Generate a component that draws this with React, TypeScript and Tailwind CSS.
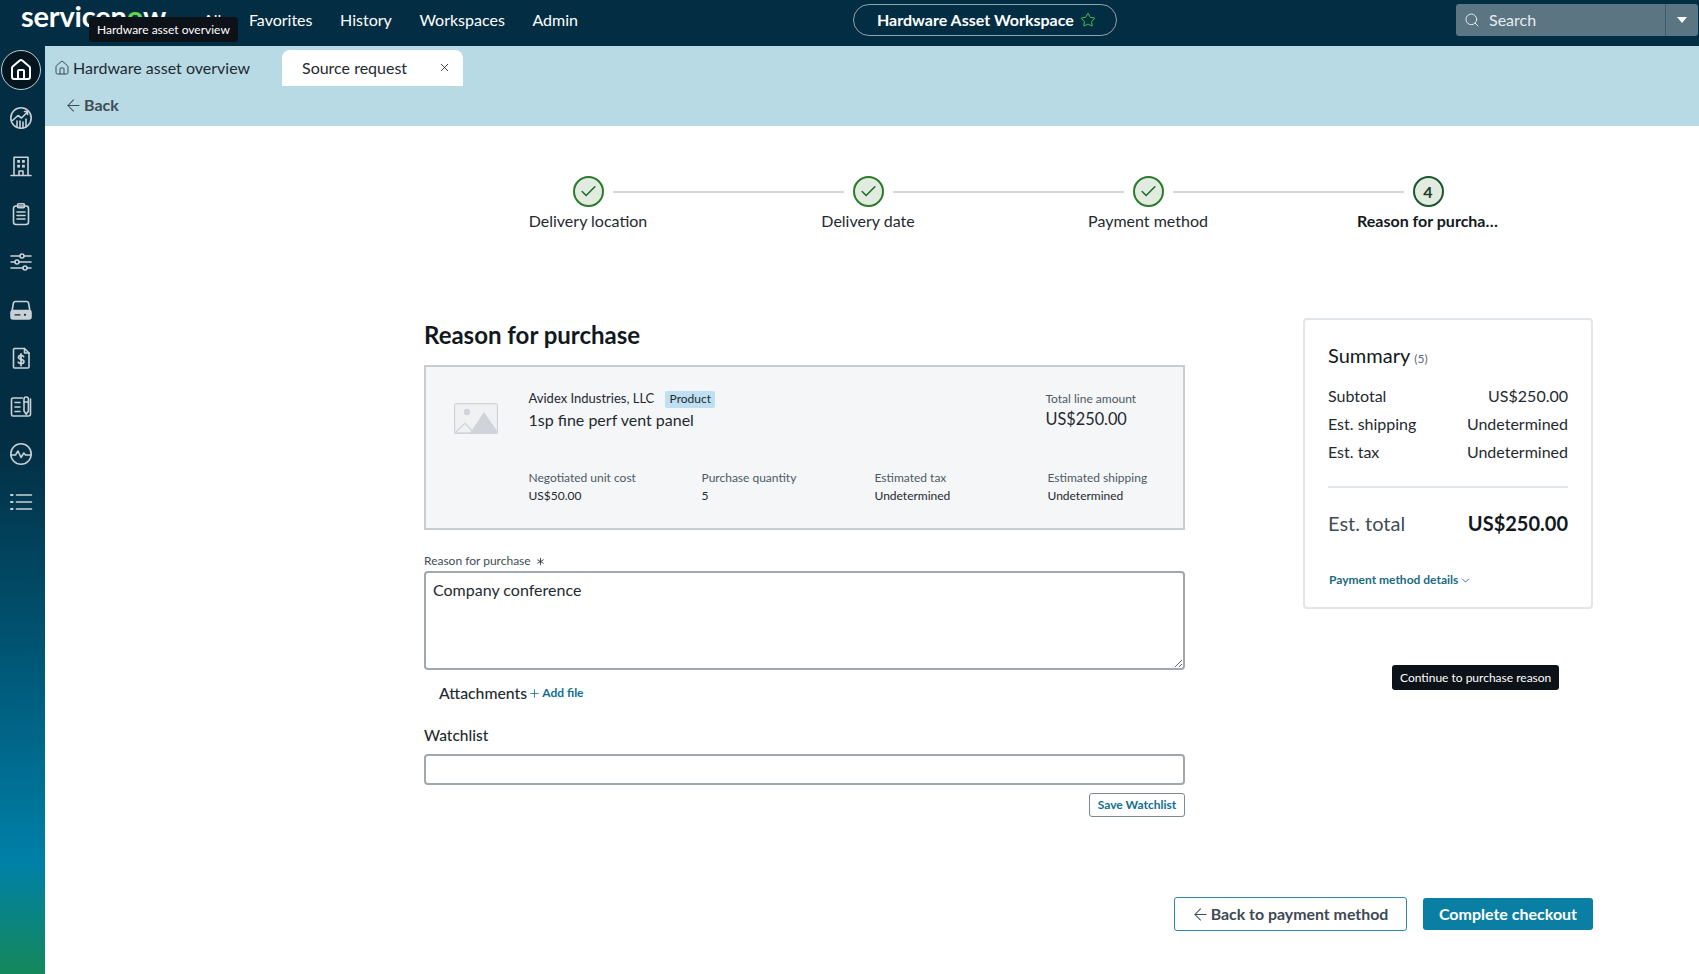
import { ArrowLeft, Asterisk, Check, ChevronDown, House, Plus, Search, Star, X } from "lucide-react";

const navLinks = ["All", "Favorites", "History", "Workspaces", "Admin"];

const steps = [
  { label: "Delivery location", done: true },
  { label: "Delivery date", done: true },
  { label: "Payment method", done: true },
  { label: "Reason for purchase", done: false },
];

const lineDetails = [
  { label: "Negotiated unit cost", value: "US$50.00" },
  { label: "Purchase quantity", value: "5" },
  { label: "Estimated tax", value: "Undetermined" },
  { label: "Estimated shipping", value: "Undetermined" },
];

const summaryRows = [
  { label: "Subtotal", value: "US$250.00" },
  { label: "Est. shipping", value: "Undetermined" },
  { label: "Est. tax", value: "Undetermined" },
];

// stroke icons of the side rail, drawn by hand to follow the reference
const railIcons = [
  <>
    <circle cx="12" cy="12" r="10.2" />
    <path d="M3.5 14.5 9 9.5l3.5 2.5 6-6M15.5 5.5h3v3" />
    <path d="M8 21v-6M11 22v-7M14 22v-6M17 21v-8" />
  </>,
  <>
    <path d="M5 21.5V3.2h14v18.3M2 21.5h20M10 21.5v-4.5h4v4.5" />
    <g fill="currentColor" stroke="none">
      <rect x="8.2" y="6" width="2.8" height="2.8" />
      <rect x="13" y="6" width="2.8" height="2.8" />
      <rect x="8.2" y="10.8" width="2.8" height="2.8" />
      <rect x="13" y="10.8" width="2.8" height="2.8" />
    </g>
  </>,
  <>
    <rect x="4.5" y="4" width="15" height="18.5" rx="2.5" />
    <rect x="8.5" y="1.8" width="7" height="4" rx="1.2" />
    <path d="M8 10h8M8 13.5h8M8 17h8" />
  </>,
  <>
    <path d="M2 6h9M15 6h7M2 12h4M10 12h12M2 18h12M18 18h4" />
    <circle cx="13" cy="6" r="2" />
    <circle cx="8" cy="12" r="2" />
    <circle cx="16" cy="18" r="2" />
  </>,
  <>
    <path d="M3 13.5 4.3 5.6A2.4 2.4 0 0 1 6.7 3.5h10.6a2.4 2.4 0 0 1 2.4 2.1L21 13.5" />
    <path
      d="M4 12.5h16a2 2 0 0 1 2 2V19a2 2 0 0 1-2 2H4a2 2 0 0 1-2-2v-4.5a2 2 0 0 1 2-2z"
      fill="currentColor"
    />
    <circle cx="16" cy="16.8" r="1.1" fill="#032d42" stroke="none" />
    <path d="M6 16.8h5" stroke="#032d42" strokeWidth="1.2" />
  </>,
  <>
    <path d="M5.5 2.5h10l4.5 4.5v14a1 1 0 0 1-1 1H5.5a1 1 0 0 1-1-1v-17.5a1 1 0 0 1 1-1z" />
    <path d="M15.5 2.5V7H20" />
    <path d="M14.6 10.6c-.5-.9-1.4-1.3-2.5-1.3-1.5 0-2.6.8-2.6 2s1 1.7 2.6 2.1c1.6.4 2.8.9 2.8 2.2s-1.2 2.1-2.8 2.1c-1.2 0-2.3-.5-2.8-1.5M12 7.8v11.8" strokeWidth="1.8" />
  </>,
  <>
    <path d="M13.5 4H4a1.5 1.5 0 0 0-1.5 1.5v15A1.5 1.5 0 0 0 4 22h15.5a2 2 0 0 0 2-2V5" />
    <path d="M6 8.5h5M6 13h5M6 17.5h5" />
    <path d="M15 5.2a2.2 2.2 0 0 1 4.4 0V17l-2.2 3.2L15 17z" />
    <path d="M15 8h4.4" />
  </>,
  <>
    <circle cx="12" cy="12" r="10.2" />
    <path d="M2 13h4.5L9 9l3 6.5 2.8-4.5 1.7 2H22" />
  </>,
  <>
    <path d="M7.5 5h15M7.5 12h15M7.5 19h15" />
    <path d="M2 5h1.6M2 12h1.6M2 19h1.6" strokeWidth="2" />
  </>,
];

function TopBar() {
  return (
    <header className="relative flex h-[46px] shrink-0 items-center bg-[#032d42] pb-[6px] text-white">
      <div className="flex w-[853px] shrink-0 items-center pl-[21px]">
        <span className="mb-[8px] w-[182px] text-[29px] leading-[34px] font-bold tracking-[-0.2px]">
          servicen<span className="text-[#62d84e]">o</span>w
        </span>
        <nav className="flex items-center gap-[27.6px] text-[16px] leading-[20px]">
          {navLinks.map((link) => (
            <a key={link}>{link}</a>
          ))}
        </nav>
      </div>
      <div className="flex h-[32px] w-[264px] items-center rounded-full border border-[#8fa3ad] pl-[23px]">
        <span className="text-[16px] leading-[20px] font-bold">Hardware Asset Workspace</span>
        <Star className="ml-[6px] h-[16px] w-[16px] text-[#46c846]" strokeWidth={1.5} />
      </div>
      <div className="ml-auto mr-[1px] flex h-[32px] w-[242px] items-center rounded-[3px] bg-[#5b7583]">
        <Search className="ml-[8px] h-[16px] w-[16px] text-[#e7ecef]" strokeWidth={1.5} />
        <span className="ml-[9px] text-[16px] leading-[20px] text-[#e7ecef]">Search</span>
        <span className="ml-auto flex h-full w-[33px] items-center justify-center border-l border-[#3f5a69]">
          <svg width="10" height="6" viewBox="0 0 10 6">
            <path d="M0 0h10L5 6z" fill="#fff" />
          </svg>
        </span>
      </div>
      <div className="absolute top-[17px] left-[89px] rounded-[4px] bg-[#0c1217] px-[8px] py-[4px] text-[12px] leading-[17px] whitespace-nowrap">
        Hardware asset overview
      </div>
    </header>
  );
}

function SideRail() {
  return (
    <aside className="flex w-[45px] shrink-0 flex-col bg-[linear-gradient(to_bottom,#032d42_0%,#032d42_42%,#005a7a_68%,#0080a8_88%,#14885a_100%)] pr-[3px]">
      <div className="flex h-[48px] items-center justify-center">
        <span className="flex h-[40px] w-[40px] items-center justify-center rounded-full border border-[#c3ccd1] bg-[#03161f]">
          <House className="h-[24px] w-[24px] text-white" strokeWidth={2} />
        </span>
      </div>
      {railIcons.map((icon, i) => (
        <div key={i} className="flex h-[48px] items-center justify-center">
          <svg
            width="24"
            height="24"
            viewBox="0 0 24 24"
            fill="none"
            stroke="currentColor"
            strokeWidth="1.6"
            strokeLinecap="round"
            strokeLinejoin="round"
            className="text-[#c9d1d5]"
          >
            {icon}
          </svg>
        </div>
      ))}
    </aside>
  );
}

function TabBand() {
  return (
    <div className="h-[80px] shrink-0 bg-[#b8dae5]">
      <div className="flex h-[40px] items-end pl-[9px]">
        <div className="flex h-[36px] w-[228px] items-center pb-[1px] text-[#1f2a30]">
          <House className="h-[16px] w-[16px] text-[#3f4d57]" strokeWidth={1.5} />
          <span className="ml-[3px] text-[16px] leading-[20px]">Hardware asset overview</span>
        </div>
        <div className="flex h-[36px] w-[181px] items-center rounded-t-[8px] bg-white pb-[1px] pl-[20px] text-[#1f2a30]">
          <span className="text-[16px] leading-[20px]">Source request</span>
          <X className="ml-auto mr-[12px] h-[13px] w-[13px]" strokeWidth={1.6} />
        </div>
      </div>
      <div className="flex h-[38px] items-center pl-[19px] text-[#3f4d57]">
        <ArrowLeft className="h-[19px] w-[19px]" strokeWidth={1.3} />
        <span className="ml-[1px] text-[16px] leading-[20px] font-bold">Back</span>
      </div>
    </div>
  );
}

function Stepper() {
  return (
    <div className="ml-[403px] grid w-[1120px] grid-cols-4 pt-[50px]">
      {steps.map((step, i) => (
        <div key={step.label} className="flex flex-col items-center">
          <div className="flex w-full items-center gap-[9px]">
            <span className={`h-[2px] flex-1 ${i === 0 ? "" : "bg-[#d6d9db]"}`} />
            <span
              className={`flex h-[31px] w-[31px] items-center justify-center rounded-full border-2 bg-[#e2ebe0] ${
                step.done ? "border-[#2c7a2c]" : "border-[#1c5530]"
              }`}
            >
              {step.done ? (
                <Check className="h-[19px] w-[19px] text-[#226b26]" strokeWidth={2} />
              ) : (
                <span className="text-[16px] leading-[20px] font-bold text-[#24402a]">4</span>
              )}
            </span>
            <span className={`h-[2px] flex-1 ${i === 3 ? "" : "bg-[#d6d9db]"}`} />
          </div>
          <div
            className={`mt-[4px] mb-[1px] max-w-[142px] truncate text-[16px] leading-[20px] ${
              step.done ? "text-[#1f2a30]" : "font-bold text-[#12191e]"
            }`}
          >
            {step.label}
          </div>
        </div>
      ))}
    </div>
  );
}

function LineItem() {
  return (
    <div className="mt-[14px] flex h-[165px] border-2 border-[#c9cdd0] bg-[#f5f6f8] pt-[23px] pl-[28px]">
      <svg width="44" height="31" viewBox="0 0 44 31" className="mt-[13px] mr-[30.5px] shrink-0">
        <rect x="0.6" y="0.6" width="42.8" height="29.8" rx="2" fill="#f0f1f3" stroke="#d0d4d9" strokeWidth="1.2" />
        <circle cx="13" cy="9" r="3.2" fill="#d0d4da" />
        <path d="M16 30 30 9l13 19v2z" fill="#d0d4da" />
        <path d="M1 30 11 20l9 10z" fill="none" stroke="#d0d4da" strokeWidth="1.2" />
      </svg>
      <div className="flex-1">
        <div className="grid grid-cols-[517px_1fr]">
          <div>
            <div className="flex h-[18px] items-center text-[13px] text-[#1f2a30]">
              Avidex Industries, LLC
              <span className="ml-[11px] flex h-[17px] w-[50px] items-center justify-center rounded-[2px] bg-[#bfe0f2] text-[12px]">
                Product
              </span>
            </div>
            <div className="mt-[1px] text-[16px] leading-[22px] text-[#1f2a30]">1sp fine perf vent panel</div>
          </div>
          <div>
            <div className="text-[12px] leading-[18px] text-[#4b5a64]">Total line amount</div>
            <div className="text-[16.3px] leading-[22px] text-[#1f2a30]">US$250.00</div>
          </div>
        </div>
        <div className="mt-[39px] grid grid-cols-[173px_173px_173px_1fr]">
          {lineDetails.map((detail) => (
            <div key={detail.label}>
              <div className="text-[12px] leading-[16px] text-[#4b5a64]">{detail.label}</div>
              <div className="mt-[2px] text-[12px] leading-[16px] text-[#1f2a30]">{detail.value}</div>
            </div>
          ))}
        </div>
      </div>
    </div>
  );
}

function PurchaseForm() {
  return (
    <div className="w-[761px] shrink-0">
      <h1 className="h-[33px] text-[24px] leading-[34px] font-bold text-[#12191e]">Reason for purchase</h1>
      <LineItem />
      <label className="mt-[23px] flex h-[16px] items-center text-[12px] text-[#3f4d57]">
        Reason for purchase
        <Asterisk className="ml-[3px] h-[13px] w-[13px] text-[#1f2a30]" strokeWidth={1.5} />
      </label>
      <textarea
        defaultValue="Company conference"
        className="mt-[2px] block h-[99px] w-full rounded-[4px] border-2 border-[#a1a8ad] bg-white px-[7px] py-[5px] text-[16px] leading-[24px] text-[#1f2a30]"
      />
      <div className="mt-[13px] flex h-[20px] items-center pl-[15px]">
        <span className="text-[15.8px] leading-[20px] font-medium text-[#1f2a30]">Attachments</span>
        <Plus className="ml-[1px] h-[13px] w-[13px] text-[#0f6f8f]" strokeWidth={1.5} />
        <span className="ml-[1px] text-[12px] font-bold text-[#0f6f8f]">Add file</span>
      </div>
      <div className="mt-[22px] text-[15.5px] leading-[20px] font-medium text-[#1f2a30]">Watchlist</div>
      <input className="mt-[9px] block h-[31px] w-full rounded-[4px] border-2 border-[#a1a8ad] bg-white" />
      <div className="mt-[8px] flex justify-end">
        <button className="h-[24px] w-[96px] rounded-[3px] border border-[#7b8a93] text-[12px] font-bold text-[#0f6f8f]">
          Save Watchlist
        </button>
      </div>
    </div>
  );
}

function Summary() {
  return (
    <div className="relative w-[290px] shrink-0">
      <div className="h-[291px] rounded-[4px] border-2 border-[#e3e6e8] px-[23px] pt-[22px] text-[#1f2a30]">
        <div className="flex h-[26px] items-baseline">
          <span className="text-[20px] leading-[26px] text-[#12191e]">Summary</span>
          <span className="ml-[4px] text-[12px] text-[#5d6a73]">(5)</span>
        </div>
        <div className="mt-[14px] flex flex-col">
          {summaryRows.map((row) => (
            <div key={row.label} className="flex h-[28px] items-center justify-between text-[16px]">
              <span>{row.label}</span>
              <span>{row.value}</span>
            </div>
          ))}
        </div>
        <div className="mt-[20px] h-[2px] bg-[#e3e6e8]" />
        <div className="mt-[19px] flex h-[32px] items-center justify-between">
          <span className="text-[20px] text-[#3f4d57]">Est. total</span>
          <span className="text-[20px] font-bold text-[#12191e]">US$250.00</span>
        </div>
        <div className="mt-[33px] flex h-[16px] items-center pl-[1px] text-[12px] font-bold text-[#1a6a85]">
          Payment method details
          <ChevronDown className="ml-[1px] h-[13px] w-[13px]" strokeWidth={1.6} />
        </div>
      </div>
      <div className="absolute top-[347px] left-[89px] rounded-[3px] bg-[#0c1217] px-[8px] py-[4px] text-[12px] leading-[17px] whitespace-nowrap text-white">
        Continue to purchase reason
      </div>
    </div>
  );
}

export default function App() {
  return (
    <div className="flex h-screen w-full flex-col overflow-hidden bg-white font-[Lato,sans-serif]">
      <TopBar />
      <div className="flex min-h-0 flex-1">
        <SideRail />
        <main className="min-w-0 flex-1">
          <TabBand />
          <Stepper />
          <div className="mt-[86px] ml-[379px] flex gap-[118px]">
            <PurchaseForm />
            <Summary />
          </div>
          <div className="mt-[80px] mr-[106px] flex items-center justify-end gap-[16px]">
            <button className="flex h-[34px] w-[233px] items-center justify-center rounded-[3px] border-[1.5px] border-[#2f86a6] pr-[2px] text-[15.9px] font-bold text-[#3d4a54]">
              <ArrowLeft className="h-[19px] w-[19px]" strokeWidth={1.3} />
              <span className="ml-[1px]">Back to payment method</span>
            </button>
            <button className="h-[32px] w-[170px] rounded-[3px] bg-[#0a7fa3] text-[16px] font-bold text-white">
              Complete checkout
            </button>
          </div>
        </main>
      </div>
    </div>
  );
}
